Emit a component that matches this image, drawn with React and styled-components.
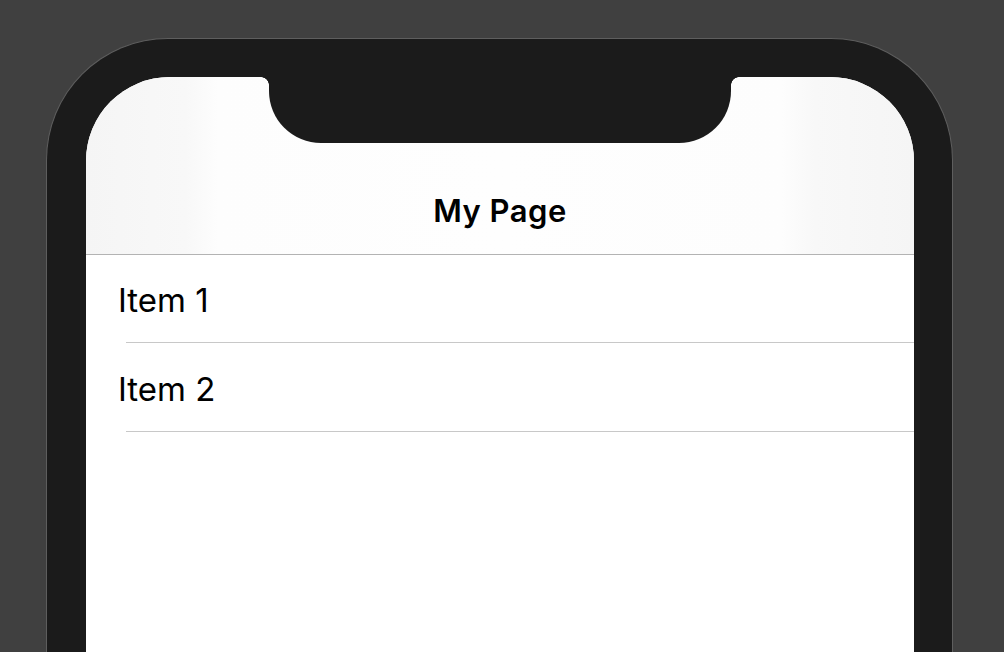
import React from 'react'
import styled, { createGlobalStyle } from 'styled-components'

const Global = createGlobalStyle`
    html, body {
        margin: 0;
        padding: 0;
        background: #404040;
        overflow: hidden;
    }
    body {
        font-family: Inter, "Noto Sans", "Liberation Sans", sans-serif;
    }
`
const Stage = styled.div`
    width: 1004px;
    height: 652px;
    overflow: hidden;
    padding: 38px 0 0 46px;
    box-sizing: border-box;
`
const Phone = styled.div`
    width: 907px;
    height: 720px;
    box-sizing: border-box;
    padding: 38px 38px 0 39px;
    background: #1b1b1b;
    border: 1.5px solid #5e5e5e;
    border-bottom: none;
    border-radius: 122px 122px 0 0;
`
const Screen = styled.div`
    position: relative;
    height: 100%;
    background: #fff;
    border-radius: 84px 84px 0 0;
    overflow: hidden;
`
const Notch = styled.div`
    position: absolute;
    top: 0;
    left: 183px;
    width: 462px;
    height: 66px;
    background: #1b1b1b;
    border-radius: 0 0 52px 52px;
    &::before,
    &::after {
        content: '';
        position: absolute;
        top: 0;
        width: 8px;
        height: 8px;
    }
    &::before {
        left: -8px;
        background: radial-gradient(circle at 0 8px, transparent 7.5px, #1b1b1b 8px);
    }
    &::after {
        right: -8px;
        background: radial-gradient(circle at 8px 8px, transparent 7.5px, #1b1b1b 8px);
    }
`
const NavBar = styled.header`
    height: 178px;
    box-sizing: border-box;
    display: flex;
    align-items: flex-end;
    justify-content: center;
    padding-bottom: 25px;
    background: linear-gradient(90deg, #f5f5f5 0%, #f8f8f8 12%, #fdfdfd 16%, #fefefe 50%, #fdfdfd 84%, #f8f8f8 88%, #f5f5f5 100%);
    border-bottom: 1px solid #b3b3b3;
`
const Title = styled.h1`
    margin: 0;
    font-size: 31px;
    font-weight: 600;
    color: #000;
    letter-spacing: 0.5px;
`
const List = styled.ul`
    list-style: none;
    margin: 0;
    padding: 0;
`
const Row = styled.li`
    height: ${props => props.h}px;
    display: flex;
    align-items: center;
    padding-left: 32px;
    position: relative;
    font-size: 33px;
    color: #000;
    &::after {
        content: '';
        position: absolute;
        left: 40px;
        right: 0;
        bottom: 0;
        height: 1px;
        background: #c8c8c8;
    }
`
const Label = styled.span`
    margin-top: 2px;
`

const items = [
    { label: 'Item 1', h: 88 },
    { label: 'Item 2', h: 89 }
]

export default function App() {
    return (
        <>
            <Global />
            <Stage>
                <Phone>
                    <Screen>
                        <NavBar>
                            <Title>My Page</Title>
                        </NavBar>
                        <List>
                            {items.map(item => (
                                <Row key={item.label} h={item.h}>
                                    <Label>{item.label}</Label>
                                </Row>
                            ))}
                        </List>
                        <Notch />
                    </Screen>
                </Phone>
            </Stage>
        </>
    )
}
